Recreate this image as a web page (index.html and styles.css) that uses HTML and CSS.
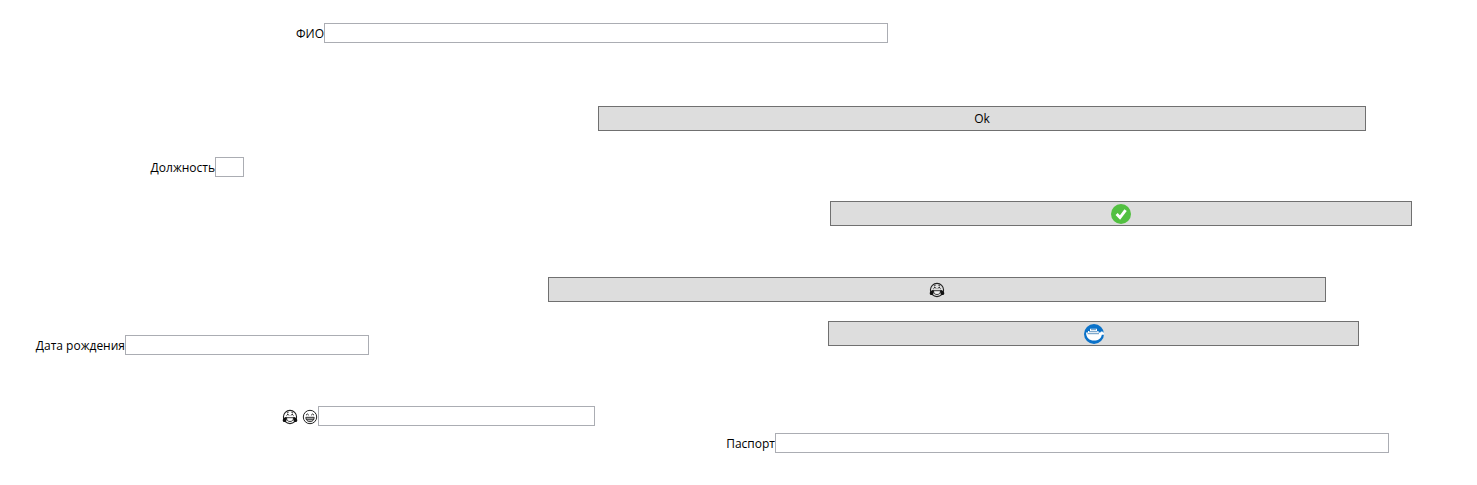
FILE: index.html
```html
<!DOCTYPE html>
<html lang="ru">
<head>
<meta charset="utf-8">
<meta name="viewport" content="width=device-width, initial-scale=1">
<title>Анкета</title>
<link rel="stylesheet" href="styles.css">
</head>
<body>
<svg class="defs" aria-hidden="true">
  <symbol id="joy" viewBox="0 0 16 16">
    <circle cx="8" cy="8" r="6.6" fill="none" stroke="#222" stroke-width="1.1"/>
    <path d="M4.500 6.500 6 5.200 7 6.500M9 6.500l1-1.300 1.500 1.300M5 4l1.500-.6M11 4l-1.500-.6" fill="none" stroke="#222" stroke-width="1"/>
    <path d="M4.500 8.700h7c0 2.400-1.300 3.800-3.500 3.800s-3.500-1.400-3.500-3.800z" fill="#fff" fill-opacity=".6" stroke="#222" stroke-width=".9"/>
    <path d="M4.600 7.800C2.500 8.300.7 9.700.7 11.200c0 1.200.9 1.900 1.900 1.900 1.900 0 2.400-2.400 2-5.300zM11.400 7.800c2.100.5 3.900 1.900 3.900 3.400 0 1.200-.9 1.900-1.900 1.900-1.900 0-2.400-2.400-2-5.300z" fill="#111"/>
  </symbol>
  <symbol id="grin" viewBox="0 0 16 16">
    <circle cx="8" cy="8" r="6.700" fill="none" stroke="#222" stroke-width="1"/>
    <path d="M4 6.200 5.400 5 6.800 6.200M9.200 6.200l1.400-1.200L12 6.200" fill="none" stroke="#222" stroke-width="1"/>
    <path d="M3.800 8.300h8.400c0 2.600-1.700 4.400-4.200 4.400s-4.200-1.800-4.200-4.400z" fill="#bbb" stroke="#222" stroke-width=".9"/>
    <path d="M4 10.300h8" stroke="#222" stroke-width=".8"/>
  </symbol>
</svg>
<form class="form">
  <div class="row row-name">
    <label for="name">ФИО</label>
    <input id="name" type="text">
  </div>
  <div class="row row-ok">
    <button type="button">Ok</button>
  </div>
  <div class="row row-position">
    <label for="position">Должность</label>
    <input id="position" type="text">
  </div>
  <div class="row row-check">
    <button type="button" aria-label="Подтвердить">
      <svg class="badge" viewBox="0 0 20 20" aria-hidden="true">
        <circle cx="10" cy="10" r="10" fill="#52c041"/>
        <path d="M5.600 10 9 13.600 14.600 6.200" fill="none" stroke="#fff" stroke-width="2.900"/>
      </svg>
    </button>
  </div>
  <div class="row row-joy">
    <button type="button" aria-label="Смех">
      <svg class="emoji"><use href="#joy"/></svg>
    </button>
  </div>
  <div class="row row-birth">
    <label for="birth">Дата рождения</label>
    <input id="birth" type="text">
    <button type="button" aria-label="Корабль">
      <svg class="badge" viewBox="0 0 20 20" aria-hidden="true">
        <circle cx="10" cy="10" r="10" fill="#0b72c9"/>
        <path d="M2 8.500h2V7h2V4.700h7V7h1.500v1.500h1.800L17 7.500h1.500l.5 1H20v2.200h-2.200c-.6 3.600-3.400 5.800-7.800 5.800-4.700 0-7.700-2.500-8-8z" fill="#fff"/>
        <path d="M7 5.700h5M5 7.700h8.500M3.500 9.700H15" stroke="#3a78b0" stroke-width=".8"/>
      </svg>
    </button>
  </div>
  <div class="row row-mood">
    <label for="mood" class="mood" aria-label="Настроение">
      <svg class="emoji"><use href="#joy"/></svg>
      <svg class="emoji"><use href="#grin"/></svg>
    </label>
    <input id="mood" type="text">
  </div>
  <div class="row row-passport">
    <label for="passport">Паспорт</label>
    <input id="passport" type="text">
  </div>
</form>
</body>
</html>
```
FILE: styles.css
```css
* {
  box-sizing: border-box;
}

body {
  margin: 0;
  background: #fff;
  color: #000;
  font: 12px/16px "Open Sans", "Noto Sans", sans-serif;
}

.defs {
  display: none;
}

.form {
  padding: 23px 0 32px;
}

/* Columns are proportional shares of the window width. */
.row {
  display: grid;
  align-items: end;
}

.row label {
  justify-self: end;
  white-space: nowrap;
  padding-bottom: 1px;
}

input {
  width: 100%;
  min-width: 0;
  height: 20px;
  margin: 0;
  padding: 0 3px;
  border: 1px solid #abadb3;
  border-radius: 0;
  background: #fff;
  font: inherit;
}

button {
  display: flex;
  align-items: center;
  justify-content: center;
  height: 25px;
  margin: 0;
  padding: 0;
  border: 1px solid #707070;
  border-radius: 0;
  background: #ddd;
  color: #000;
  font: inherit;
}

.badge {
  width: 20px;
  height: 20px;
}

.emoji {
  display: block;
  width: 16px;
  height: 16px;
}

.row .mood {
  display: flex;
  gap: 4px;
}

.row-name {
  grid-template-columns: 324fr 564fr 589fr;
}

.row-ok {
  grid-template-columns: 598fr 768fr 111fr;
  margin-top: 63px;
}

.row-position {
  grid-template-columns: 215fr 29fr 1233fr;
  margin-top: 26px;
}

.row-check {
  grid-template-columns: 830fr 582fr 65fr;
  margin-top: 24px;
}

.row-joy {
  grid-template-columns: 548fr 778fr 151fr;
  margin-top: 51px;
}

.row-ok button,
.row-check button,
.row-joy button {
  grid-column: 2;
}

.row-birth {
  grid-template-columns: 125fr 244fr 459fr 531fr 118fr;
  min-height: 34px;
  margin-top: 19px;
}

.row-birth button {
  grid-column: 4;
  align-self: start;
}

.row-mood {
  grid-template-columns: 318fr 277fr 882fr;
  margin-top: 51px;
}

.row-passport {
  grid-template-columns: 775fr 614fr 88fr;
  margin-top: 7px;
}
```
